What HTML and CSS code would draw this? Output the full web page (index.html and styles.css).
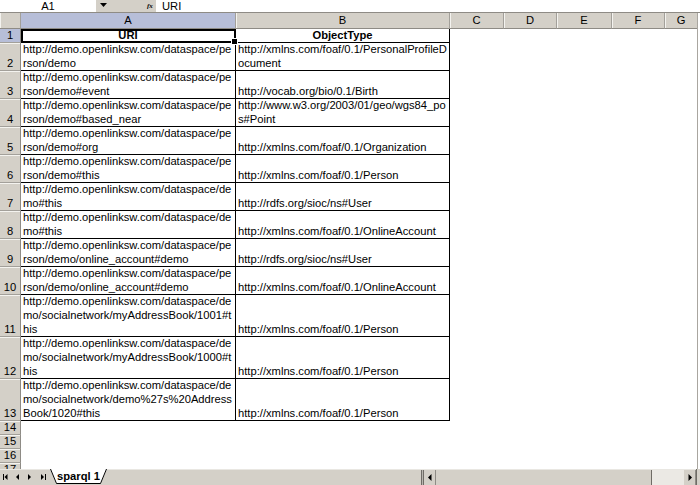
FILE: index.html
```html
<!DOCTYPE html>
<html>
<head>
<meta charset="utf-8">
<link rel="stylesheet" href="styles.css">
</head>
<body>
<div class="app">
  <div class="fbar">
    <div class="namebox">A1</div>
    <div class="fxzone">
      <svg class="drop" width="8" height="5" viewBox="0 0 8 5"><polygon points="0,0 7,0 3.5,4" fill="#000"/></svg>
      <span class="fx">fx</span>
    </div>
    <div class="formula">URI</div>
  </div>

  <div class="sheet">
    <div class="vedge"></div>
    <div class="corner"></div>
    <div class="ch sel">A</div><div class="ch">B</div><div class="ch">C</div><div class="ch">D</div><div class="ch">E</div><div class="ch">F</div><div class="ch last">G</div>

    <div class="rh sel">1</div>
    <div class="c hd a1"><span>URI</span></div>
    <div class="c hd"><span>ObjectType</span></div>

    <div class="rh">2</div>
    <div class="c"><span>http://demo.openlinksw.com/dataspace/pe</span><span>rson/demo</span></div>
    <div class="c"><span>http://xmlns.com/foaf/0.1/PersonalProfileD</span><span>ocument</span></div>

    <div class="rh">3</div>
    <div class="c"><span>http://demo.openlinksw.com/dataspace/pe</span><span>rson/demo#event</span></div>
    <div class="c"><span>http://vocab.org/bio/0.1/Birth</span></div>

    <div class="rh">4</div>
    <div class="c"><span>http://demo.openlinksw.com/dataspace/pe</span><span>rson/demo#based_near</span></div>
    <div class="c"><span>http://www.w3.org/2003/01/geo/wgs84_po</span><span>s#Point</span></div>

    <div class="rh">5</div>
    <div class="c"><span>http://demo.openlinksw.com/dataspace/pe</span><span>rson/demo#org</span></div>
    <div class="c"><span>http://xmlns.com/foaf/0.1/Organization</span></div>

    <div class="rh">6</div>
    <div class="c"><span>http://demo.openlinksw.com/dataspace/pe</span><span>rson/demo#this</span></div>
    <div class="c"><span>http://xmlns.com/foaf/0.1/Person</span></div>

    <div class="rh">7</div>
    <div class="c"><span>http://demo.openlinksw.com/dataspace/de</span><span>mo#this</span></div>
    <div class="c"><span>http://rdfs.org/sioc/ns#User</span></div>

    <div class="rh">8</div>
    <div class="c"><span>http://demo.openlinksw.com/dataspace/de</span><span>mo#this</span></div>
    <div class="c"><span>http://xmlns.com/foaf/0.1/OnlineAccount</span></div>

    <div class="rh">9</div>
    <div class="c"><span>http://demo.openlinksw.com/dataspace/pe</span><span>rson/demo/online_account#demo</span></div>
    <div class="c"><span>http://rdfs.org/sioc/ns#User</span></div>

    <div class="rh">10</div>
    <div class="c"><span>http://demo.openlinksw.com/dataspace/pe</span><span>rson/demo/online_account#demo</span></div>
    <div class="c"><span>http://xmlns.com/foaf/0.1/OnlineAccount</span></div>

    <div class="rh">11</div>
    <div class="c"><span>http://demo.openlinksw.com/dataspace/de</span><span>mo/socialnetwork/myAddressBook/1001#t</span><span>his</span></div>
    <div class="c"><span>http://xmlns.com/foaf/0.1/Person</span></div>

    <div class="rh">12</div>
    <div class="c"><span>http://demo.openlinksw.com/dataspace/de</span><span>mo/socialnetwork/myAddressBook/1000#t</span><span>his</span></div>
    <div class="c"><span>http://xmlns.com/foaf/0.1/Person</span></div>

    <div class="rh">13</div>
    <div class="c"><span>http://demo.openlinksw.com/dataspace/de</span><span>mo/socialnetwork/demo%27s%20Address</span><span>Book/1020#this</span></div>
    <div class="c"><span>http://xmlns.com/foaf/0.1/Person</span></div>

    <div class="rh">14</div>
    <div class="rh">15</div>
    <div class="rh">16</div>
    <div class="rh">17</div>
  </div>

  <div class="tabbar">
    <svg class="nav" width="48" height="16" viewBox="0 0 48 16">
      <rect x="3" y="5" width="1" height="6" fill="#000"/>
      <polygon points="7.5,5 7.5,11 4.5,8" fill="#000"/>
      <polygon points="19,5 19,11 16,8" fill="#000"/>
      <polygon points="28,5 28,11 31,8" fill="#000"/>
      <polygon points="41,5 41,11 44,8" fill="#000"/>
      <rect x="45" y="5" width="1" height="6" fill="#000"/>
    </svg>
    <div class="tab">
      <svg class="tabshape" width="57" height="16" viewBox="0 0 57 16">
        <polygon points="0,0 6,14 51,14 57,0" fill="#fff"/>
        <polyline points="0.5,0 6.5,14.5 50.5,14.5 56.5,0" fill="none" stroke="#000" stroke-width="1"/>
      </svg>
      <span class="tabtext">sparql 1</span>
    </div>
    <div class="spacer"></div>
    <div class="hscroll">
      <div class="split"></div>
      <div class="sbtn">
        <svg width="4" height="7" viewBox="0 0 4 7"><polygon points="3.5,0 3.5,7 0,3.5" fill="#000"/></svg>
      </div>
      <div class="thumb"></div>
      <div class="track"></div>
      <div class="sbtn">
        <svg width="4" height="7" viewBox="0 0 4 7"><polygon points="0.5,0 0.5,7 4,3.5" fill="#000"/></svg>
      </div>
    </div>
    <div class="redge"></div>
  </div>
</div>
</body>
</html>
```

FILE: styles.css
```css
* { box-sizing: border-box; }

html, body {
  margin: 0;
  padding: 0;
  background: #fff;
}

body {
  font-family: "Liberation Sans", Arial, sans-serif;
  font-size: 11.2px;
  color: #000;
  width: 700px;
  height: 485px;
  overflow: hidden;
}

.app {
  display: flex;
  flex-direction: column;
  width: 700px;
  height: 485px;
}

/* formula bar */
.fbar {
  display: flex;
  height: 13px;
  border-bottom: 1px solid #8e8b85;
  line-height: 12px;
  flex: none;
}

.namebox {
  width: 96px;
  text-align: center;
  background: #fff;
}

.fxzone {
  width: 60px;
  background: #d4d0c8;
  display: flex;
  align-items: center;
  padding-left: 4px;
}

.drop {
  display: block;
  margin-top: -1px;
}

.fx {
  margin-left: 39px;
  font-family: "Liberation Serif", serif;
  font-style: italic;
  font-weight: bold;
  font-size: 7px;
  line-height: 12px;
}

.formula {
  flex: 1;
  background: #fff;
  padding-left: 6px;
}

/* grid sheet */
.sheet {
  flex: none;
  height: 456px;
  overflow: hidden;
  display: grid;
  grid-template-columns: 21px 215px 214px 54px 53px 55px 53px 32px 3px;
  grid-template-rows: 16px 14px repeat(9, 28px) repeat(3, 42px) repeat(4, 14px);
  line-height: 14px;
}

.vedge {
  grid-column: 9;
  grid-row: 1 / -1;
  border-left: 1px solid #a9a6a0;
  background: #fff;
}

.corner,
.ch {
  background: #d4d0c8;
  border-bottom: 1px solid #8e8b85;
  border-right: 1px solid #a3a09a;
  box-shadow: inset 1px 0 0 #f4f3ef;
}

.ch {
  text-align: center;
  line-height: 14px;
}

.ch.last {
  border-right: none;
}

.ch.sel,
.rh.sel {
  background: #b7bed8;
  box-shadow: none;
}

.rh {
  grid-column: 1;
  background: #d4d0c8;
  border-right: 1px solid #8e8b85;
  border-bottom: 1px solid #a3a09a;
  box-shadow: inset 0 1px 0 #f4f3ef;
  text-align: center;
  display: flex;
  align-items: flex-end;
  justify-content: center;
}

.c {
  border-right: 1px solid #000;
  border-bottom: 1px solid #000;
  padding-left: 2px;
  display: flex;
  flex-direction: column;
  justify-content: flex-end;
  white-space: nowrap;
  overflow: visible;
}

.c span {
  display: block;
  height: 14px;
  flex: none;
}

.c.hd {
  font-weight: bold;
  text-align: center;
  padding-left: 0;
}

.a1 {
  position: relative;
  outline: 2px solid #000;
  outline-offset: -2px;
}

.a1::after {
  content: "";
  position: absolute;
  right: -3px;
  bottom: -3px;
  width: 5px;
  height: 5px;
  background: #000;
  border: 1px solid #fff;
}

/* tab bar */
.tabbar {
  flex: none;
  height: 16px;
  display: flex;
  background: #d4d0c8;
  box-shadow: inset 0 1px 0 #e9e7e2;
}

.nav {
  display: block;
  flex: none;
}

.tab {
  position: relative;
  width: 57px;
  height: 16px;
  margin-left: 2px;
  flex: none;
}

.tabshape {
  position: absolute;
  left: 0;
  top: 0;
  display: block;
}

.tabtext {
  position: relative;
  display: block;
  padding-left: 7px;
  font-weight: bold;
  line-height: 14px;
}

.spacer {
  flex: 1;
}

.hscroll {
  width: 275px;
  display: flex;
  flex: none;
  padding-top: 1px;
}

.split {
  width: 3px;
  border-left: 1px solid #6f6c66;
  border-right: 1px solid #6f6c66;
  background: #b9b6b0;
}

.sbtn {
  width: 12px;
  display: flex;
  align-items: center;
  justify-content: center;
  background: #d4d0c8;
  border-right: 1px solid #8e8b85;
}

.sbtn svg {
  display: block;
}

.thumb {
  width: 216px;
  background: #d4d0c8;
  border-right: 1px solid #6f6c66;
}

.track {
  width: 32px;
  background: #ebe9e4;
}

.redge {
  width: 4px;
  border-left: 1px solid #6f6c66;
  background: #d4d0c8;
  flex: none;
}
```
